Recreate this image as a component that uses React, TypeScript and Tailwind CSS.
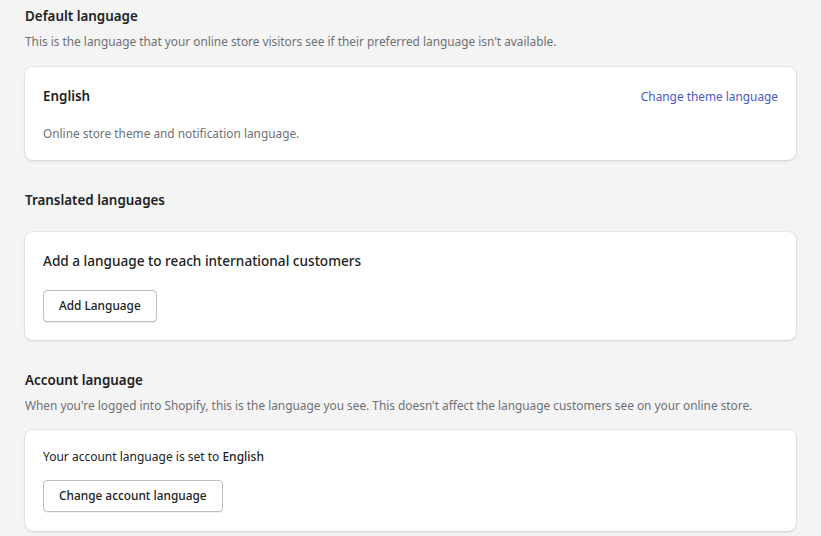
const font = { fontFamily: '"Segoe UI", "Noto Sans", sans-serif' };

function SectionHeader({ title, desc }: { title: string; desc?: string }) {
  return (
    <div className="flex flex-col gap-[6px]">
      <h2 className="text-[13.4px] leading-[20px] font-semibold text-[#202223]">{title}</h2>
      {desc && <p className="text-[11.85px] leading-[18px] text-[#6d7175]">{desc}</p>}
    </div>
  );
}

function Card({ children }: { children: React.ReactNode }) {
  return (
    <div className="bg-white rounded-[8px] shadow-[0_0_0_1px_rgba(63,63,68,0.05),0_1px_3px_0_rgba(63,63,68,0.15)] px-[18px]">
      {children}
    </div>
  );
}

function Button({ children }: { children: React.ReactNode }) {
  return (
    <button className="h-[32px] px-[15px] border border-[#babfc3] rounded-[4px] bg-white text-[11.85px] font-medium text-[#202223] shadow-[0_1px_0_rgba(0,0,0,0.05)]">
      {children}
    </button>
  );
}

export default function App() {
  return (
    <div className="min-h-screen bg-[#f4f4f4] px-[25px] pt-[6px]" style={font}>
      <div className="w-[771px]">
        <SectionHeader
          title="Default language"
          desc="This is the language that your online store visitors see if their preferred language isn't available."
        />
        <div className="mt-[17px]">
          <Card>
            <div className="flex items-center justify-between pt-[19px]">
              <span className="text-[13.4px] leading-[20px] font-semibold text-[#202223]">English</span>
              <a className="text-[11.85px] leading-[20px] text-[#4959bd]" href="#">
                Change theme language
              </a>
            </div>
            <p className="pt-[18px] pb-[18px] text-[11.85px] leading-[18px] text-[#6d7175]">
              Online store theme and notification language.
            </p>
          </Card>
        </div>

        <div className="mt-[30px]">
          <SectionHeader title="Translated languages" />
        </div>
        <div className="mt-[22px]">
          <Card>
            <div className="pt-[19px] pb-[18px] flex flex-col items-start gap-[19px]">
              <span className="text-[13.6px] leading-[20px] font-medium text-[#202223]">
                Add a language to reach international customers
              </span>
              <Button>Add Language</Button>
            </div>
          </Card>
        </div>

        <div className="mt-[30px]">
          <SectionHeader
            title="Account language"
            desc="When you're logged into Shopify, this is the language you see. This doesn't affect the language customers see on your online store."
          />
        </div>
        <div className="mt-[16px]">
          <Card>
            <div className="pt-[18px] pb-[19px] flex flex-col items-start gap-[14px]">
              <span className="text-[12px] leading-[18px] text-[#202223]">
                Your account language is set to <span className="font-medium">English</span>
              </span>
              <Button>Change account language</Button>
            </div>
          </Card>
        </div>
      </div>
    </div>
  );
}
